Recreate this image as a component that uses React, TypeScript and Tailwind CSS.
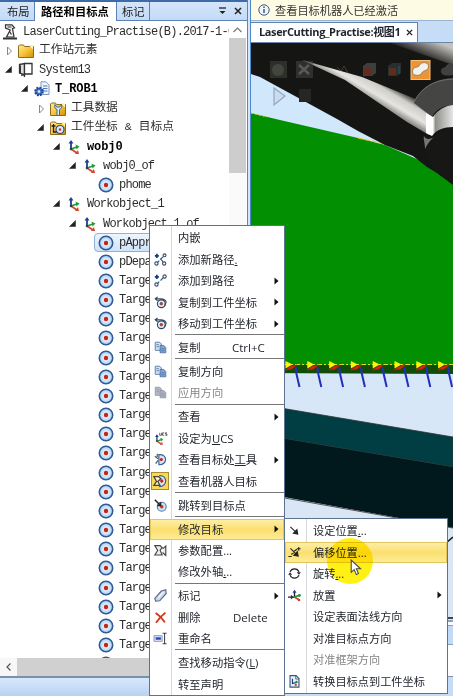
import React from "react";

type IconName =
  | "robot" | "folder" | "controller" | "task" | "tools" | "targets" | "axes" | "target"
  | "addNew" | "addTo" | "copyWobj" | "copy" | "paste" | "ucs" | "viewTool" | "viewRobot"
  | "jump" | "config" | "tag" | "delete" | "rename" | "setPos" | "offsetPos" | "rotate" | "place" | "convert";

const S = 16;

function Axes() {
  return (
    <g fill="none" strokeWidth="1.8">
      <path d="M5 3v7" stroke="#1d3f8f" />
      <path d="M5 10l6-2" stroke="#1f9d3a" />
      <path d="M5 10l6 4" stroke="#d8442c" />
      <path d="M2.500 4.500L5 1l2.500 3.500z" fill="#1d3f8f" stroke="none" />
      <path d="M9.500 5.500l4 2-3 3z" fill="#1f9d3a" stroke="none" />
      <path d="M9 15l4 0-1-4z" fill="#d8442c" stroke="none" />
      <circle cx="5" cy="10" r="1.300" fill="#244" stroke="none" />
    </g>
  );
}

function Arm() {
  return (
    <g fill="#f2f2f2" stroke="#333" strokeWidth="1.200">
      <path d="M3.500 .8h6.500l2.500 3-2 .8 1.500 8.400h-7.500l3.700-7-4.700-2z" />
      <path d="M5.500 3h4M7.500 7.500l2 3" fill="none" />
      <path d="M1 14.500h14" strokeWidth="2" />
    </g>
  );
}

function Swirl() {
  return (
    <g fill="none" stroke="#2f4560" strokeWidth="1.400">
      <circle cx="9" cy="9.500" r="4.800" fill="#e6effa" />
      <circle cx="9" cy="9.500" r="1.700" fill="#d43a22" stroke="#60402f" strokeWidth=".7" />
      <path d="M2 3.500h6.500c3.500 0 5.500 1 6.500 4l-2 5M4.500 1L1.500 3.500l3 2.500" />
    </g>
  );
}

function Pages({ gray = false }: { gray?: boolean }) {
  return (
    <g fill={gray ? "#b3bac4" : "#cfe2f7"} stroke={gray ? "#8d96a3" : "#4a6c9a"}>
      <path d="M1.500 1.500h5.500l2 2v8h-7.500z" />
      <path d="M7.500 5.500h4.500l2.500 2.500v6.500h-7z" fill={gray ? "#a8b0bb" : "#7fa6d8"} />
      <path d="M3 4.500h3M3 7h3M9 9.500h4M9 12h4" />
    </g>
  );
}

function FolderShape() {
  return (
    <g>
      <path d="M.5 3l1-1h4l1 1.500h9v11h-15z" fill="url(#folder)" stroke="#8f6c1d" />
      <path d="M10.500 2h4.500v4.500z" fill="#fff4b8" />
    </g>
  );
}

function Icon({ name, size = S }: { name: IconName; size?: number }) {
  const art: Record<IconName, React.ReactNode> = {
    robot: <Arm />,
    folder: <FolderShape />,
    controller: (
      <g stroke="#333" strokeWidth="1.300">
        <path d="M1.500 2.500l5-1v11l-5-1.500z" fill="#ddd" />
        <path d="M6.500 1.500h7.500v10.500h-7.500z" fill="#fff" />
        <path d="M3 13h3.500v2" fill="none" />
        <path d="M2 3.500v8" strokeWidth="2" />
      </g>
    ),
    task: (
      <g>
        <path d="M7 .8h5l3 3v9.700h-8z" fill="#eef4fb" stroke="#7d97b8" />
        <path d="M9 5h4.500M9 7.500h4.500M9 10h4.500" stroke="#4b7bb8" />
        <circle cx="5" cy="10.500" r="3.700" fill="#3f73c9" stroke="#1c4595" strokeWidth="2.200" strokeDasharray="1.800 1.100" />
        <circle cx="5" cy="10.500" r="1.300" fill="#e9f1ff" />
      </g>
    ),
    tools: (
      <g>
        <FolderShape />
        <path d="M5 3.500c-1 3 .8 4.500 2 5v6h2.500v-6c1.500-.7 3-2 2-5l-1.700 2.500H6.700z" fill="#dcecff" stroke="#38669f" />
      </g>
    ),
    targets: (
      <g>
        <FolderShape />
        <circle cx="10" cy="9.500" r="4" fill="#dcecff" stroke="#284a7f" strokeWidth="1.200" />
        <circle cx="10" cy="9.500" r="1.300" fill="#c9321d" />
        <path d="M3.500 4v8h3M1.500 6h4" stroke="#222" strokeWidth="1.300" fill="none" />
      </g>
    ),
    axes: <Axes />,
    target: (
      <g>
        <circle cx="8" cy="8" r="6.700" fill="url(#disc)" stroke="#315a92" strokeWidth="1.600" />
        <circle cx="8" cy="8" r="2.200" fill="#c92312" />
      </g>
    ),
    addNew: (
      <g fill="none" stroke="#39506f" strokeWidth="1.400">
        <path d="M3.500 1v5M1 3.500h5" stroke="#153c83" strokeWidth="2.200" />
        <circle cx="13" cy="2.800" r="1.800" /><circle cx="3" cy="13" r="2" /><circle cx="12.500" cy="13" r="2" />
        <path d="M4.500 11.500l2-2M7.500 8l4-3.500M9 8l2 3" />
      </g>
    ),
    addTo: (
      <g fill="none" stroke="#39506f" strokeWidth="1.400">
        <path d="M3.500 1v5M1 3.500h5" stroke="#153c83" strokeWidth="2.200" />
        <circle cx="13" cy="3" r="2" /><circle cx="3" cy="13" r="2" />
        <path d="M4.500 11.500l2-2M8 8l3.500-3.500" />
      </g>
    ),
    copyWobj: <Swirl />,
    copy: <Pages />,
    paste: <Pages gray />,
    ucs: (
      <g>
        <g transform="translate(-1 2) scale(.92)"><Axes /></g>
        <path d="M7 1v3h2.200V1M12.500 1h-2v3h2M16 1h-2v1.500h2v1.500h-2" fill="none" stroke="#333" strokeWidth=".9" />
      </g>
    ),
    viewTool: (
      <g fill="none" stroke="#355f96" strokeWidth="1.400">
        <path d="M6 2c11-1 11 13 0 12.500z" fill="#cfe5fb" />
        <circle cx="9" cy="8" r="1.900" fill="#c92312" stroke="none" />
        <path d="M1 4l4 3M2 13l3-4M4 1v4" stroke="#555" />
      </g>
    ),
    viewRobot: (
      <g fill="none" stroke="#355f96" strokeWidth="1.400">
        <path d="M7 2c10-1 10 12.500 0 12.500" fill="#cfe5fb" />
        <circle cx="10" cy="8" r="1.900" fill="#c92312" stroke="none" />
        <path d="M1 3h5.500L9 5.500 5.500 8.500 8 13H1l3-4.500z" fill="#fff3bb" stroke="#444" />
      </g>
    ),
    jump: (
      <g>
        <circle cx="9.500" cy="9.500" r="5.500" fill="#c8e2f8" stroke="#517aa6" strokeWidth="1.300" />
        <circle cx="9.500" cy="9.500" r="2.100" fill="#d92f1a" />
        <path d="M1 1l7 7M8 4v4H4" fill="none" stroke="#222" strokeWidth="1.900" />
      </g>
    ),
    config: (
      <g fill="#eee" stroke="#444" strokeWidth="1.400">
        <path d="M1 2h6.500L10 4.500 7.500 7.500l2.500 6H1L4.500 8z" />
        <path d="M10.500 6l4-3.500v11.500l-4-3.500" />
      </g>
    ),
    tag: (
      <g>
        <path d="M1 11.500L9 2.500l5.500-1.500 .5 4.500L7 14.500l-5 .5z" fill="#cbd7ea" stroke="#57698a" strokeWidth="1.400" />
        <path d="M5 11l6.500-7" stroke="#f4f7fc" strokeWidth="1.500" />
      </g>
    ),
    delete: <path d="M2 2.500c5 3 8 7 11.500 11.500M14 2C9 6 6 9 2.500 14.500" stroke="#d33420" strokeWidth="2.300" fill="none" />,
    rename: (
      <g fill="none">
        <path d="M0 4.500h10v7H0z" fill="#dfe6f5" stroke="#7889a8" />
        <path d="M2 6.500h6.500v3H2z" fill="#2647c4" />
        <path d="M10.500 1.500h5M10.500 14.500h5M13 1.500v13" stroke="#444" strokeWidth="1.300" />
      </g>
    ),
    setPos: <path d="M3 3.500l6 6M6.500 11.500l5.500 1-1-5.500z" stroke="#222" fill="#222" strokeWidth="1.300" />,
    offsetPos: (
      <g stroke="#222" strokeWidth="1.300" fill="none">
        <path d="M3 3l7 7" /><path d="M7 11.500l5.500 1-1-5.500z" fill="#222" />
        <path d="M11 3.500h4.500M13.200 1.200v4.600M.5 13H4.500M7.500 6.500l3.500-2.500M4 10.500l3-2" />
      </g>
    ),
    rotate: (
      <g stroke="#222" strokeWidth="1.500" fill="none">
        <path d="M2.500 6c2-5 9-5 11 0M13.500 10c-2 5-9 5-11 0" />
        <path d="M10.800 6.500h5L13.500 9.500zM.2 9.500h5L2.500 6.500z" fill="#222" stroke="none" />
      </g>
    ),
    place: (
      <g>
        <path d="M0 10h8M8 3v7" stroke="#223" strokeWidth="1.700" />
        <path d="M5.500 4.500L8 .8l2.500 3.700z" fill="#1d3f8f" /><path d="M3.500 7v6L7 10z" fill="#333" />
        <path d="M8 10l5-2" stroke="#219a3c" strokeWidth="2" /><path d="M8 10l5 3" stroke="#d23a25" strokeWidth="2" />
        <circle cx="14" cy="8" r="1.800" fill="#219a3c" /><circle cx="13.500" cy="13.500" r="1.600" fill="#d23a25" />
      </g>
    ),
    convert: (
      <g>
        <path d="M2.500 .8h7.500l3.500 3.500v10.700H2.500z" fill="#e9f2fb" stroke="#38567d" strokeWidth="1.400" />
        <path d="M5.500 4.500v6l5-1.500" fill="none" stroke="#1d3f8f" strokeWidth="1.500" />
        <circle cx="10.500" cy="8.500" r="1.500" fill="#219a3c" /><circle cx="9.500" cy="12.200" r="1.400" fill="#d23a25" />
        <path d="M9.500 1v4h4" fill="none" stroke="#38567d" />
      </g>
    ),
  };
  return (
    <svg width={size} height={size} viewBox="0 0 16 16" className="block shrink-0 overflow-visible">
      {art[name]}
    </svg>
  );
}

function Gradients() {
  return (
    <svg width="0" height="0" className="absolute">
      <defs>
        <linearGradient id="folder" x1="0" y1="0" x2="1" y2="1">
          <stop offset="0" stopColor="#ffec9c" />
          <stop offset=".5" stopColor="#f8c53a" />
          <stop offset="1" stopColor="#d08c0a" />
        </linearGradient>
        <radialGradient id="disc">
          <stop offset="0" stopColor="#ffffff" />
          <stop offset="1" stopColor="#a9d2f5" />
        </radialGradient>
      </defs>
    </svg>
  );
}

type Node = { label: string; icon: IconName; x: string; open?: boolean; leaf?: boolean; bold?: boolean; cjk?: boolean; selected?: boolean };

const nodes: Node[] = [
  { label: "LaserCutting_Practise(B).2017-1-6", icon: "robot", x: "pl-[2px]", leaf: true },
  { label: "工作站元素", icon: "folder", x: "pl-[5px]", cjk: true },
  { label: "System13", icon: "controller", x: "pl-[5px]", open: true },
  { label: "T_ROB1", icon: "task", x: "pl-[21px]", open: true, bold: true },
  { label: "工具数据", icon: "tools", x: "pl-[37px]", cjk: true },
  { label: "工件坐标 & 目标点", icon: "targets", x: "pl-[37px]", open: true, cjk: true },
  { label: "wobj0", icon: "axes", x: "pl-[53px]", open: true, bold: true },
  { label: "wobj0_of", icon: "axes", x: "pl-[69px]", open: true },
  { label: "phome", icon: "target", x: "pl-[98px]", leaf: true },
  { label: "Workobject_1", icon: "axes", x: "pl-[53px]", open: true },
  { label: "Workobject_1_of", icon: "axes", x: "pl-[69px]", open: true },
  { label: "pApproach", icon: "target", x: "pl-[98px]", leaf: true, selected: true },
  { label: "pDepart", icon: "target", x: "pl-[98px]", leaf: true },
  ...Array.from({ length: 21 }, (_, i): Node => ({ label: `Target_${(i + 1) * 10}`, icon: "target", x: "pl-[98px]", leaf: true })),
];

function TreeRow({ node }: { node: Node }) {
  return (
    <div className={`relative flex h-[19.16px] shrink-0 items-center whitespace-nowrap ${node.x}`}>
      {node.selected && (
        <div className="absolute inset-y-0 left-[94px] right-0 rounded-sm border border-[#8fb2dc] bg-gradient-to-b from-[#edf5fe] to-[#cfe3fa]" />
      )}
      {!node.leaf && (
        <svg width="13" height="10" viewBox="0 0 13 10" className="shrink-0">
          {node.open ? <path d="M6.500 1.500v6h-6z" fill="#222" stroke="#222" strokeWidth=".5" /> : <path d="M2.500 1l4 4-4 4z" fill="#fff" stroke="#888" />}
        </svg>
      )}
      <div className="relative"><Icon name={node.icon} /></div>
      <span
        className={`relative ml-[5px] ${
          node.cjk ? "text-[11.7px]" : node.bold ? "text-[12px] tracking-[-0.1px]" : "text-[12px] tracking-[-0.8px]"
        } ${node.bold ? "font-bold text-black" : "text-[#2c2c2c]"}`}
      >
        {node.label}
      </span>
    </div>
  );
}

function Explorer() {
  return (
    <section className="flex w-[247px] shrink-0 flex-col border-t-2 border-[#3c6ba8] bg-white">
      <div className="flex h-[19px] shrink-0 items-stretch border-b border-[#5a82b4] bg-gradient-to-b from-[#d5e5fa] to-[#c3daf7] font-['Noto_Sans_CJK_SC',sans-serif] text-[11.3px] leading-[18px] text-[#222]">
        <div className="w-[35px] border-r border-[#5a82b4] pl-[7px]">布局</div>
        <div className="-mb-px w-[81px] bg-white pl-[6px] font-bold text-black">路径和目标点</div>
        <div className="w-[34px] border-x border-[#5a82b4] pl-[5px]">标记</div>
        <div className="flex flex-1 items-center justify-end gap-[8px] pr-[5px]">
          <svg width="7" height="8" viewBox="0 0 7 8"><path d="M0 1h7" stroke="#222" strokeWidth="1.300" /><path d="M0.500 4h6l-3 3z" fill="#222" /></svg>
          <svg width="8" height="8" viewBox="0 0 8 8"><path d="M1 1l6 6M7 1L1 7" stroke="#222" strokeWidth="1.500" /></svg>
        </div>
      </div>
      <div className="flex h-[637px] shrink-0">
        <div className="flex w-[229px] flex-col overflow-hidden pt-[1.4px] font-['Liberation_Mono','Noto_Sans_CJK_SC',monospace]">
          {nodes.map((n, i) => <TreeRow key={i} node={n} />)}
        </div>
        <div className="flex w-[17px] flex-col bg-[#fafafa]">
          <div className="flex h-[17px] items-center justify-center bg-white">
            <svg width="9" height="6" viewBox="0 0 9 6"><path d="M.5 5l4-4 4 4" fill="none" stroke="#777" strokeWidth="1.200" /></svg>
          </div>
          <div className="h-[135px] bg-[#cdcdcd]" />
        </div>
      </div>
      <div className="flex h-[18px] shrink-0 bg-[#d0d0d0]">
        <div className="flex w-[17px] items-center justify-center bg-[#f7f7f7]">
          <svg width="5" height="8" viewBox="0 0 5 8"><path d="M4.500 .5L1 4l3.500 3.500" fill="none" stroke="#555" strokeWidth="1.200" /></svg>
        </div>
      </div>
      <div className="flex-1 border-t-2 border-[#7d8fae] bg-gradient-to-b from-[#d8e8fb] to-[#b9d2f1]" />
    </section>
  );
}

const markers = [0, 1, 2, 3, 4, 5, 6, 7];

function Scene() {
  return (
    <svg width="202" height="577" viewBox="251 43 202 577" className="block shrink-0">
      <defs>
        <linearGradient id="sky" x1="0" y1="0" x2="0" y2="1">
          <stop offset="0" stopColor="#cfe8fd" />
          <stop offset="1" stopColor="#dbe6f3" />
        </linearGradient>
        <linearGradient id="beam" gradientUnits="userSpaceOnUse" x1="392" y1="86" x2="379" y2="108">
          <stop offset="0" stopColor="#4b4a47" />
          <stop offset=".25" stopColor="#cfcec9" />
          <stop offset=".6" stopColor="#e6e5e1" />
          <stop offset="1" stopColor="#6a6963" />
        </linearGradient>
        <linearGradient id="corner" gradientUnits="userSpaceOnUse" x1="440" y1="43" x2="432" y2="62">
          <stop offset="0" stopColor="#c4c2bf" />
          <stop offset="1" stopColor="#171715" />
        </linearGradient>
        <linearGradient id="collar" x1="0" y1="0" x2="1" y2="0">
          <stop offset="0" stopColor="#ffffff" />
          <stop offset=".25" stopColor="#ffffff" />
          <stop offset=".35" stopColor="#8f8f8c" />
          <stop offset="1" stopColor="#e6e6e4" />
        </linearGradient>
      </defs>
      <rect x="251" y="43" width="202" height="577" fill="url(#sky)" />
      <path d="M251 113l29 7 78 18 27 7 68 30v190H251z" fill="#029002" />
      <path d="M251 113l16 4" stroke="#c9d930" strokeDasharray="2 2" />
      <path d="M358 138l27 6" stroke="#d9c52a" strokeWidth="1.200" strokeDasharray="5 2" />
      <path d="M251 43h202v142l-16-12-10-6-14-11-28-11-27-14-21-12-77-42-9-3z" fill="#151614" />
      <path d="M390 43h63v22z" fill="url(#corner)" />
      <path d="M302 60l60 17 56 23 13 8-2 27-22-13-62-42z" fill="url(#beam)" />
      <path d="M414 103c5-14 19-24 39-25v27c-12 1-17 5-21 12z" fill="#454643" />
      <path d="M414 102c7-14 19-22 39-23" fill="none" stroke="#6d6e6a" />
      <path d="M426 113l7 4c5-7 11-11 20-12v22c-9 0-17 3-21 9l-6-3z" fill="url(#collar)" />
      <path d="M425 151l-1-17 8 4c4-5 10-9 21-10v53c-15-4-22-12-28-30z" fill="#171816" />
      <path d="M425 149c0-7-2-10-1-13 2 4 6 3 9 2-4 3-6 7-8 11z" fill="#777874" />
      <g opacity=".55">
        <path d="M270 61h17v17h-17z" fill="#41463c" /><circle cx="278" cy="70" r="6" fill="#66705f" />
        <path d="M296 61h17v17h-17z" fill="#454643" /><path d="M299 65l10 9m0-9l-10 9" stroke="#92938f" strokeWidth="2.500" />
        <path d="M337 67l4 4 3-5 4 7" stroke="#635f54" fill="none" />
        <path d="M363 66l4-3h9v10l-4 3h-9z" fill="#60615e" /><path d="M364 68h7v7h-7z" fill="#9e3f29" />
        <path d="M388 66l4-3h9v10l-4 3h-9z" fill="#384447" /><path d="M389 68h7v7h-7z" fill="#9d3e29" /><path d="M399 66v8" stroke="#386a79" strokeWidth="2" />
        <path d="M441 71c0-4 5-3 5-5 2-3 7-2 7 0v9c-6 1-12 1-12-4z" fill="#666764" />
      </g>
      <rect x="411" y="60.500" width="19" height="19" fill="#ef9430" stroke="#f6c17a" />
      <path d="M412.500 72c0-6 5-4 6.500-6 2-5 9.500-4 9.500 0 0 5-4 4-6 6-2 5-10 4-10 0z" fill="#f3f1ea" stroke="#77726a" strokeWidth=".8" />
      <path d="M274 88v17l11-9z" fill="#c3d2e6" fillOpacity=".55" stroke="#8797ad" strokeOpacity=".8" strokeWidth="1.200" />
      <rect x="299" y="89" width="12" height="13" fill="#252725" />

      <path d="M251 365h202v9l-202-1z" fill="#104d08" />
      <path d="M284 364.500h169" stroke="#d8dd23" strokeWidth="1.200" strokeDasharray="5 2 2 2" />
      {markers.map((i) => (
        <g key={i} transform={`translate(${281.5 + i * 21.8} 361)`}>
          <path d="M4 0l7 3.500-7 4z" fill="#fcf400" />
          <path d="M4 9l5-3.500 6-1.500-5 4z" fill="#dc2616" stroke="#b9200f" />
          <path d="M14 6l1 7 3 13" stroke="#2030bd" strokeWidth="2" fill="none" />
        </g>
      ))}
      <path d="M251 403l202 34v30l-202-34z" fill="#003e43" stroke="#333" strokeWidth=".8" />
      <path d="M251 433l202 34v61l-202-37z" fill="#01191d" />
      <path d="M251 492l202 36" stroke="#555" />
      <path d="M446 543l7-6M446 618h7" stroke="#111" strokeWidth="1.500" />
    </svg>
  );
}

function Viewer() {
  return (
    <section className="flex min-w-0 flex-1 flex-col">
      <div className="flex h-[21px] shrink-0 items-center border-b border-[#9bb3cf] bg-[#fdfbe3] pl-[7px] font-['Noto_Sans_CJK_SC',sans-serif] text-[11.2px] text-[#333]">
        <svg width="12" height="12" viewBox="0 0 12 12"><circle cx="6" cy="6" r="5.200" fill="#f1f5fa" stroke="#3d5a80" /><path d="M6 5v4M6 2.500v1.500" stroke="#3d5a80" strokeWidth="1.500" /></svg>
        <span className="ml-[5px]">查看目标机器人已经激活</span>
      </div>
      <div className="flex h-[22px] shrink-0 items-end border-b border-[#6d87a8] bg-gradient-to-r from-[#d5e6fb] to-[#c5dcf7]">
        <div className="flex h-[20px] w-[167px] items-center whitespace-nowrap border-r border-t border-[#5a82b4] bg-white pl-[8px] font-['Open_Sans','Noto_Sans_CJK_SC',sans-serif] text-[11px] font-bold text-[#1d2430]">
          <span className="w-[147px] tracking-[-0.37px]">LaserCutting_Practise:视图1</span>
          <svg width="7" height="7" viewBox="0 0 8 8"><path d="M1 1l6 6M7 1L1 7" stroke="#222" strokeWidth="1.600" /></svg>
        </div>
      </div>
      <Scene />
      <div className="h-[5px] shrink-0 border-t-2 border-[#7fa3cf] bg-white" />
      <div className="h-[20px] shrink-0 border-y border-[#7fa3cf] bg-[#c3daf7]" />
      <div className="h-[31px] shrink-0 bg-white" />
      <div className="flex-1 border-t border-[#7d8fae] bg-[#c6dbf5]" />
    </section>
  );
}

type Item = { label: string; icon?: IconName; more?: boolean; key?: string; dim?: boolean; hot?: boolean; boxed?: boolean; access?: string; tail?: string };

const mainMenu: Item[][] = [
  [
    { label: "内嵌" },
    { label: "添加新路径", access: ".", icon: "addNew" },
    { label: "添加到路径", icon: "addTo", more: true },
    { label: "复制到工件坐标", icon: "copyWobj", more: true },
    { label: "移动到工件坐标", icon: "copyWobj", more: true },
  ],
  [{ label: "复制", icon: "copy", key: "Ctrl+C" }],
  [{ label: "复制方向", icon: "copy" }, { label: "应用方向", icon: "paste", dim: true }],
  [
    { label: "查看", more: true },
    { label: "设定为", access: "U", tail: "CS", icon: "ucs" },
    { label: "查看目标处", access: "工", tail: "具", icon: "viewTool", more: true },
    { label: "查看机器人目标", icon: "viewRobot", boxed: true },
  ],
  [{ label: "跳转到目标点", icon: "jump" }],
  [
    { label: "修改目标", more: true, hot: true },
    { label: "参数配置...", icon: "config" },
    { label: "修改外轴", access: ".", tail: ".." },
  ],
  [
    { label: "标记", icon: "tag", more: true },
    { label: "删除", icon: "delete", key: "Delete" },
    { label: "重命名", icon: "rename" },
  ],
  [{ label: "查找移动指令(", access: "L", tail: ")" }, { label: "转至声明" }],
];

const subMenu: Item[] = [
  { label: "设定位置", access: ".", tail: "..", icon: "setPos" },
  { label: "偏移位置...", icon: "offsetPos", hot: true },
  { label: "旋转", access: ".", tail: "..", icon: "rotate" },
  { label: "放置", icon: "place", more: true },
  { label: "设定表面法线方向" },
  { label: "对准目标点方向" },
  { label: "对准框架方向", dim: true },
  { label: "转换目标点到工件坐标", icon: "convert" },
];

function MenuRow({ item, sub = false }: { item: Item; sub?: boolean }) {
  return (
    <div
      className={`relative flex shrink-0 items-center whitespace-nowrap ${sub ? "h-[21.5px]" : "h-[21.4px]"} ${
        item.hot ? "border border-[#e3c75e] bg-gradient-to-b from-[#fdeea6] via-[#fbe06e] to-[#fdeb96]" : "border border-transparent"
      } ${item.dim ? "text-[#858585]" : "text-[#22262d]"}`}
    >
      <div className={`flex shrink-0 justify-center ${sub ? "w-[17px]" : "w-[18px]"}`}>
        {item.icon && (
          <div className={item.boxed ? "border border-[#a98c30] bg-[#f9d94f] p-px" : ""}>
            <Icon name={item.icon} size={item.boxed ? 14 : 13} />
          </div>
        )}
      </div>
      <span className={sub ? "ml-[10px]" : "ml-[9px]"}>
        {item.label}
        {item.access && <u>{item.access}</u>}
        {item.tail}
      </span>
      {item.key && (
        <span className={`ml-auto text-[11.500px] ${item.key === "Delete" ? "w-[50px]" : "w-[51px]"}`}>{item.key}</span>
      )}
      {item.more && (
        <svg width="5" height="8" viewBox="0 0 5 8" className="ml-auto mr-[4px]"><path d="M.5 0.500l4 3.500-4 3.500z" fill="#111" /></svg>
      )}
    </div>
  );
}

function ContextMenu() {
  return (
    <div className="absolute left-[149px] top-[225px] flex h-[471px] w-[136px] flex-col border border-[#5d7191] bg-white pt-[1.300px] font-['Open_Sans','Noto_Sans_CJK_SC',sans-serif] text-[11.3px] leading-none">
      <div className="absolute inset-y-0 left-[21px] w-px bg-[#d6d8dc]" />
      {mainMenu.map((group, g) => (
        <React.Fragment key={g}>
          {g > 0 && <div className="ml-[25px] h-[2.640px] shrink-0 border-t border-[#777]" />}
          {group.map((item) => <MenuRow key={item.label} item={item} />)}
        </React.Fragment>
      ))}
    </div>
  );
}

function SubMenu() {
  return (
    <div className="absolute left-[284px] top-[518px] flex h-[176px] w-[164px] flex-col border border-[#5d7191] bg-white pt-[1px] font-['Open_Sans','Noto_Sans_CJK_SC',sans-serif] text-[11.2px] leading-none">
      <div className="absolute inset-y-0 left-[21px] w-px bg-[#d6d8dc]" />
      {subMenu.map((item) => <MenuRow key={item.label} item={item} sub />)}
      <div className="absolute left-[42px] top-[19px] size-[46px] rounded-full bg-[#fff116] mix-blend-multiply" />
      <svg width="12" height="17" viewBox="0 0 11 16" className="absolute left-[65px] top-[40px]">
        <path d="M1 1v11.500l2.800-2.500 2 4.700 2-1-2-4.500h4z" fill="#fff" stroke="#444" />
      </svg>
    </div>
  );
}

export default function App() {
  return (
    <main className="relative flex h-[696px] w-[453px] overflow-hidden bg-[#c8ddf6]">
      <Gradients />
      <Explorer />
      <div className="w-[4px] shrink-0 border-x border-[#4f87c7] bg-[#d3e6fb]" />
      <Viewer />
      <ContextMenu />
      <SubMenu />
    </main>
  );
}
